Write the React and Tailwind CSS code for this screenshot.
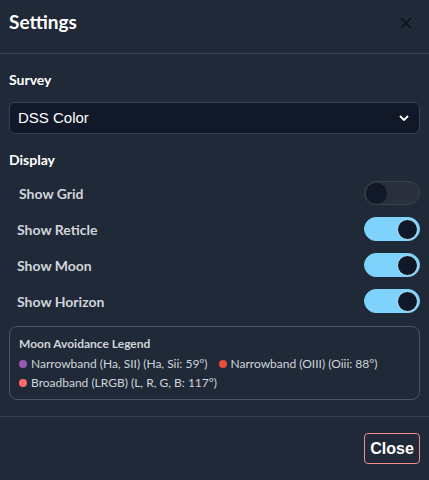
import { useState } from 'react'

const Toggle = ({ on, onChange }) => (
  <button
    type="button"
    onClick={onChange}
    className={`relative flex h-[24px] w-[56px] shrink-0 items-center rounded-full border px-[1px] ${
      on ? 'justify-end border-[#7dd3fc] bg-[#7dd3fc]' : 'justify-start border-[#374151] bg-[#2a303b]'
    }`}
  >
    <span
      className={`block h-[21px] w-[21px] rounded-full bg-[#111827] ${on ? 'border border-[#b8e6fd]' : ''}`}
    />
  </button>
)

const Dot = ({ color }) => <span className={`inline-block h-[8px] w-[8px] rounded-full ${color}`} />

export default function App() {
  const [toggles, setToggles] = useState({ grid: false, reticle: true, moon: true, horizon: true })
  const flip = (k) => setToggles((t) => ({ ...t, [k]: !t[k] }))

  const rows = [
    { key: 'grid', label: 'Show Grid', extra: 'pl-[2px]' },
    { key: 'reticle', label: 'Show Reticle', extra: '' },
    { key: 'moon', label: 'Show Moon', extra: '' },
    { key: 'horizon', label: 'Show Horizon', extra: '' },
  ]

  return (
    <div className="h-[480px] w-[429px] bg-[#1f2937] font-['Lato',sans-serif] text-white">
      <div className="flex h-[54px] items-center justify-between border-b border-[#374151] pb-[8px] pl-[9px] pr-[17px]">
        <h1 className="text-[19px] font-bold">Settings</h1>
        <svg width="12" height="12" viewBox="0 0 12 12" className="text-[#0b0f17]">
          <path d="M1 1 L11 11 M11 1 L1 11" stroke="currentColor" strokeWidth="1.4" />
        </svg>
      </div>

      <div className="px-[9px] pt-[16px]">
        <div className="text-[14px] font-bold leading-[20px]">Survey</div>
        <div className="mt-[12px] flex h-[32px] items-center justify-between rounded-md border border-[#374151] bg-[#111827] pl-[8px] pr-[10px]">
          <span className="font-['Liberation_Sans',sans-serif] text-[15px]">DSS Color</span>
          <svg width="10" height="6" viewBox="0 0 10 6">
            <path d="M1 1 L5 5 L9 1" stroke="white" strokeWidth="1.8" fill="none" />
          </svg>
        </div>

        <div className="mt-[16px] text-[14px] font-bold leading-[20px]">Display</div>
        <div className="mt-[5px] flex flex-col">
          {rows.map((r) => (
            <div key={r.key} className="flex h-[36px] items-center justify-between pl-[8px]">
              <span className={`text-[14px] font-bold text-[#d1d5db] ${r.extra}`}>{r.label}</span>
              <Toggle on={toggles[r.key]} onChange={() => flip(r.key)} />
            </div>
          ))}
        </div>

        <div className="mt-[7px] rounded-lg border border-[#4b5563] px-[9px] pb-[7px] pt-[8px] text-[12px] text-[#d1d5db]">
          <div className="font-bold leading-[18px]">Moon Avoidance Legend</div>
          <div className="mt-[1px] flex flex-wrap items-center gap-x-[11px] leading-[19px]">
            <span className="flex items-center gap-[4px]">
              <Dot color="bg-[#9b59b6]" />
              Narrowband (Ha, SII) (Ha, Sii: 59°)
            </span>
            <span className="flex items-center gap-[4px]">
              <Dot color="bg-[#e74c3c]" />
              Narrowband (OIII) (Oiii: 88°)
            </span>
            <span className="flex items-center gap-[4px]">
              <Dot color="bg-[#ff6b6b]" />
              Broadband (LRGB) (L, R, G, B: 117°)
            </span>
          </div>
        </div>
      </div>

      <div className="mt-[16px] flex justify-end border-t border-[#374151] px-[9px] pt-[16px]">
        <button
          type="button"
          className="h-[31px] w-[56px] rounded-[4px] border border-[#f08a8a] font-['Liberation_Sans',sans-serif] text-[16px] font-bold"
        >
          Close
        </button>
      </div>
    </div>
  )
}
